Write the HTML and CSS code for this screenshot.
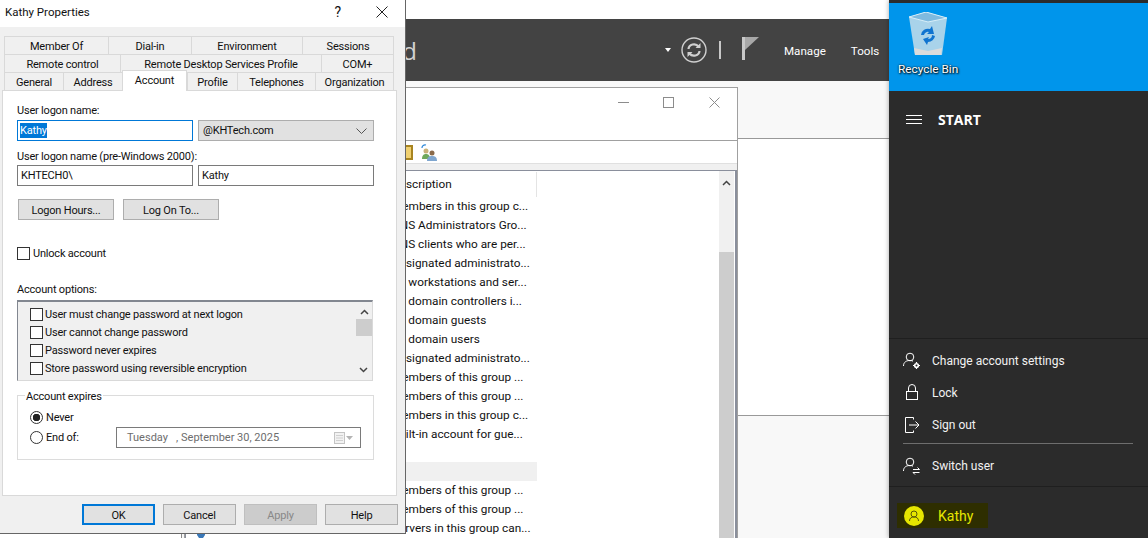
FILE: index.html
```html
<!DOCTYPE html>
<html lang="en">
<head>
    <meta charset="UTF-8">
    <title>Kathy Properties</title>
    <link rel="stylesheet" href="styles.css">
</head>
<body>
    <div class="desktop">

        <!-- server manager behind everything -->
        <div class="server">
            <div class="server-bar">
                <div class="server-title">d</div>
                <div class="server-tools">
                    <span class="caret"></span>
                    <svg class="refresh" width="26" height="26" viewBox="0 0 26 26" fill="none" stroke="#d0d0d0">
                        <circle cx="13" cy="13" r="12" stroke-width="1.4"/>
                        <path d="M7.5 12a5.5 5 0 0 1 10-2.5M18.500 14a5.500 5 0 0 1-10 2.500" stroke-width="2.200"/>
                        <path d="M19.500 6v5h-5zM6.500 20v-5h5z" fill="#d0d0d0" stroke="none"/>
                    </svg>
                    <span class="bar-sep"></span>
                    <svg class="flag" width="17" height="23" viewBox="0 0 17 23">
                        <rect x="0" y="0" width="3" height="23" fill="#c8c8c8"/>
                        <path d="M3 0h14l-14 13z" fill="#a8a8a8"/>
                    </svg>
                    <span class="bar-link manage">Manage</span>
                    <span class="bar-link">Tools</span>
                </div>
            </div>
            <div class="server-sub"></div>
            <div class="server-main"></div>
            <div class="server-foot"></div>
        </div>

        <!-- users and computers window -->
        <div class="aduc">
            <div class="aduc-title">
                <span class="win-min"></span>
                <span class="win-max"></span>
                <svg class="win-close" width="11" height="11" viewBox="0 0 11 11"><path d="M0.500 0.500l10 10M10.500 0.500l-10 10" stroke="#8c8c8c"/></svg>
            </div>
            <div class="aduc-toolbar">
                <span class="tb-folder"></span>
                <svg class="tb-users" width="17" height="17" viewBox="0 0 17 17">
                    <path d="M1 4a3 3 0 0 1 4-3" fill="none" stroke="#2a86d8" stroke-width="1.200"/>
                    <circle cx="5" cy="7" r="2.500" fill="#c9b27a"/>
                    <path d="M1 15c0-4 2-5 4-5s4 1 4 5z" fill="#6fa85c"/>
                    <circle cx="11" cy="9" r="2.500" fill="#8a6a4a"/>
                    <path d="M6 17c0-4 2-5 5-5s5 1 5 5z" fill="#7fa6cf"/>
                </svg>
            </div>
            <div class="aduc-gap"></div>
            <div class="aduc-list">
                <div class="list-body">
                    <div class="list-head"><span class="desc">Description</span></div>
                    <div class="row"><span class="desc">Members in this group c...</span></div>
                    <div class="row"><span class="desc">DNS Administrators Gro...</span></div>
                    <div class="row"><span class="desc">DNS clients who are per...</span></div>
                    <div class="row"><span class="desc">Designated administrato...</span></div>
                    <div class="row"><span class="desc">All workstations and ser...</span></div>
                    <div class="row"><span class="desc">All domain controllers i...</span></div>
                    <div class="row"><span class="desc">All domain guests</span></div>
                    <div class="row"><span class="desc">All domain users</span></div>
                    <div class="row"><span class="desc">Designated administrato...</span></div>
                    <div class="row"><span class="desc">Members of this group ...</span></div>
                    <div class="row"><span class="desc">Members of this group ...</span></div>
                    <div class="row"><span class="desc">Members in this group c...</span></div>
                    <div class="row"><span class="desc">Built-in account for gue...</span></div>
                    <div class="row row-hl"></div>
                    <div class="row"><span class="desc">Members of this group ...</span></div>
                    <div class="row"><span class="desc">Members of this group ...</span></div>
                    <div class="row"><span class="desc">Servers in this group can...</span></div>
                </div>
                <div class="list-scroll">
                    <svg class="arrow-up" width="9" height="6" viewBox="0 0 9 6"><path d="M1 5l3.500-3.500L8 5" fill="none" stroke="#444" stroke-width="1.500"/></svg>
                    <div class="list-thumb"></div>
                </div>
            </div>
        </div>

        <svg class="tree-icon" width="8" height="5" viewBox="0 0 8 5"><path d="M0 0h8v2l-2 3H2L0 2z" fill="#3a78b8"/></svg>

        <!-- properties dialog -->
        <div class="dialog">
            <div class="dlg-title">
                <span class="dlg-name">Kathy Properties</span>
                <span class="dlg-help">?</span>
                <svg class="dlg-close" width="12" height="12" viewBox="0 0 12 12"><path d="M0.500 0.500l11 11M11.500 0.500l-11 11" stroke="#222"/></svg>
            </div>

            <div class="tabs">
                <div class="tab-row">
                    <div class="tab w104">Member Of</div>
                    <div class="tab w83">Dial-in</div>
                    <div class="tab w111">Environment</div>
                    <div class="tab w92">Sessions</div>
                </div>
                <div class="tab-row">
                    <div class="tab w116">Remote control</div>
                    <div class="tab w201">Remote Desktop Services Profile</div>
                    <div class="tab w73">COM+</div>
                </div>
                <div class="tab-row">
                    <div class="tab w59">General</div>
                    <div class="tab w59">Address</div>
                    <div class="tab tab-on">Account</div>
                    <div class="tab w50">Profile</div>
                    <div class="tab w78">Telephones</div>
                    <div class="tab w79">Organization</div>
                </div>
            </div>

            <div class="panel">
                <div class="lbl first">User logon name:</div>
                <div class="field-row">
                    <div class="field field-focus"><span class="sel">Kathy</span></div>
                    <div class="field field-combo">@KHTech.com
                        <svg width="11" height="6" viewBox="0 0 11 6"><path d="M0.500 0.500l5 5 5-5" fill="none" stroke="#555"/></svg>
                    </div>
                </div>
                <div class="lbl second">User logon name (pre-Windows 2000):</div>
                <div class="field-row">
                    <div class="field">KHTECH0\</div>
                    <div class="field">Kathy</div>
                </div>
                <div class="btn-row">
                    <div class="btn">Logon Hours...</div>
                    <div class="btn">Log On To...</div>
                </div>
                <div class="check-row unlock"><span class="check"></span>Unlock account</div>
                <div class="lbl third">Account options:</div>
                <div class="opts">
                    <div class="opts-list">
                        <div class="check-row"><span class="check"></span>User must change password at next logon</div>
                        <div class="check-row"><span class="check"></span>User cannot change password</div>
                        <div class="check-row"><span class="check"></span>Password never expires</div>
                        <div class="check-row"><span class="check"></span>Store password using reversible encryption</div>
                    </div>
                    <div class="opts-scroll">
                        <svg width="9" height="6" viewBox="0 0 9 6"><path d="M1 5l3.500-3.500L8 5" fill="none" stroke="#444" stroke-width="1.500"/></svg>
                        <div class="opts-thumb"></div>
                        <svg class="opts-down" width="9" height="6" viewBox="0 0 9 6"><path d="M1 1l3.500 3.500L8 1" fill="none" stroke="#444" stroke-width="1.500"/></svg>
                    </div>
                </div>
                <div class="group">
                    <span class="legend">Account expires</span>
                    <div class="radio-row"><span class="radio radio-on"></span>Never</div>
                    <div class="radio-row end-row">
                        <span class="radio"></span><span class="end-label">End of:</span>
                        <div class="date">
                            <span class="date-text">Tuesday &nbsp; , September 30, 2025</span>
                            <svg width="20" height="12" viewBox="0 0 20 12">
                                <rect x="0.500" y="0.500" width="10" height="11" fill="#f2f2f2" stroke="#c4c4c4"/>
                                <path d="M2 3.500h7M2 6h7M2 8.500h7" stroke="#d0d0d0"/>
                                <path d="M12 4h7l-3.500 4z" fill="#b4b4b4"/>
                            </svg>
                        </div>
                    </div>
                </div>
            </div>

            <div class="dlg-buttons">
                <div class="btn btn-ok">OK</div>
                <div class="btn btn-wide">Cancel</div>
                <div class="btn btn-wide btn-off">Apply</div>
                <div class="btn btn-wide">Help</div>
            </div>
        </div>

        <!-- start menu on the right -->
        <div class="start">
            <div class="wallpaper">
                <svg class="bin" width="38" height="43" viewBox="0 0 38 43">
                    <path d="M0 5L17 0l21 6-5 37H6z" fill="#a9d3ea"/>
                    <path d="M0 5L17 0l21 6-19 4z" fill="#7fbadf"/>
                    <path d="M0 5L17 0l21 6-19 4z" fill="none" stroke="#d8eef8"/>
                    <path d="M5 36l14 3 14-3-1 7H6z" fill="#dcdcdc"/>
                    <path d="M12 23a7 7 0 0 1 9-6l2-3 2 8-7 0 2-2a4 4 0 0 0-5 3z" fill="#0f74d0"/>
                    <path d="M26 24a7 7 0 0 1-7 6l-1 3-4-6 6-2-1 2a4 4 0 0 0 4-4z" fill="#0f74d0"/>
                </svg>
                <div class="bin-label">Recycle Bin</div>
            </div>
            <div class="start-head">
                <svg width="16" height="9" viewBox="0 0 16 9"><path d="M0 0.500h16M0 4.500h16M0 8.500h16" stroke="#fff"/></svg>
                <span class="start-word">START</span>
            </div>
            <div class="start-items">
                <div class="item">
                    <svg width="18" height="18" viewBox="0 0 18 18" fill="none" stroke="#fff">
                        <circle cx="7" cy="5" r="3.800"/>
                        <path d="M0.500 14c0-4 3-5.500 6.500-5.500 1 0 2 .2 3 .6"/>
                        <circle cx="13.500" cy="13.500" r="1.800" stroke-width="1.600"/>
                        <path d="M13.500 10v1.500M13.500 15.500V17M10 13.500h1.500M15.500 13.500H17" stroke-width="1.200"/>
                    </svg>
                    <span>Change account settings</span>
                </div>
                <div class="item">
                    <svg width="18" height="18" viewBox="0 0 18 18" fill="none" stroke="#fff">
                        <rect x="3.500" y="7.500" width="11" height="8"/>
                        <path d="M5.500 7.500V4a3.500 3.500 0 0 1 7 0v3.500"/>
                    </svg>
                    <span>Lock</span>
                </div>
                <div class="item">
                    <svg width="18" height="18" viewBox="0 0 18 18" fill="none" stroke="#fff">
                        <path d="M10.500 3.500V1.500h-8v15h8v-2"/>
                        <path d="M6 9h10M12.500 5.500L16 9l-3.500 3.500"/>
                    </svg>
                    <span>Sign out</span>
                </div>
                <div class="item-sep"></div>
                <div class="item item-switch">
                    <svg width="18" height="18" viewBox="0 0 18 18" fill="none" stroke="#fff">
                        <circle cx="7" cy="5" r="3.800"/>
                        <path d="M0.500 14c0-4 3-5.500 6.500-5.500 1 0 2 .2 3 .6"/>
                        <path d="M10 12.500h6.500M14.500 10.500l2 2M10 15.500h6.500M12 17.500l-2-2"/>
                    </svg>
                    <span>Switch user</span>
                </div>
            </div>
            <div class="start-user">
                <div class="user-mark">
                    <svg width="20" height="20" viewBox="0 0 20 20">
                        <circle cx="10" cy="10" r="10" fill="#e6e600"/>
                        <circle cx="10" cy="8" r="3" fill="none" stroke="#55550a"/>
                        <path d="M5.500 15c0-3 2-4 4.500-4s4.500 1 4.500 4" fill="none" stroke="#55550a"/>
                    </svg>
                    <span class="user-name">Kathy</span>
                </div>
            </div>
        </div>
    </div>
</body>
</html>
```

FILE: styles.css
```css
*{
    margin: 0;
    padding: 0;
    box-sizing: border-box;
}
body{
    background: #fff;
    font-family: Roboto, "Liberation Sans", sans-serif;
    font-size: 11.8px;
    color: #111;
}
.desktop{
    width: 1148px;
    height: 538px;
    position: relative;
    overflow: hidden;
}

/* server manager */
.server{
    position: absolute;
    left: 181px;
    top: 0;
    width: 708px;
    height: 538px;
    border-left: 1px solid #8a8a8a;
    padding-top: 19px;
    display: flex;
    flex-direction: column;
}
.server-bar{
    height: 62px;
    background: #434343;
    display: flex;
    align-items: center;
    justify-content: space-between;
}
.server-title{
    width: 235px;
    text-align: right;
    font-family: "Open Sans", sans-serif;
    font-size: 24px;
    color: #d2d2d2;
}
.server-tools{
    display: flex;
    align-items: center;
    width: 224px;
}
.caret{
    width: 0;
    height: 0;
    border-left: 3.500px solid transparent;
    border-right: 3.500px solid transparent;
    border-top: 4px solid #fff;
    margin-right: 10px;
}
.bar-sep{
    width: 2px;
    height: 18px;
    background: #c8c8c8;
    margin: 0 21px 0 12px;
}
.flag{
    margin-bottom: 3px;
}
.bar-link{
    font-size: 11.6px;
    color: #fff;
    margin-left: 25px;
    margin-top: 2px;
}
.server-sub{
    height: 58px;
    background: #f8f8f8;
    border-bottom: 1px solid #999;
}
.server-main{
    height: 277px;
    background: #fff;
    border-bottom: 1px solid #999;
}
.server-foot{
    flex: 1;
    background: #f8f8f8;
}
.tree-icon{
    position: absolute;
    left: 197px;
    top: 533px;
}

/* aduc window */
.aduc{
    position: absolute;
    left: 184px;
    top: 87px;
    width: 554px;
    height: 460px;
    background: #fff;
    border: 1px solid #a0a0a0;
}
.aduc-title{
    height: 53px;
    border-bottom: 1px solid #a0a0a0;
    position: relative;
}
.win-min{
    position: absolute;
    left: 433px;
    top: 14px;
    width: 11px;
    height: 1px;
    background: #8c8c8c;
}
.win-max{
    position: absolute;
    left: 478px;
    top: 9px;
    width: 11px;
    height: 11px;
    border: 1px solid #8c8c8c;
}
.win-close{
    position: absolute;
    left: 524px;
    top: 9px;
}
.aduc-toolbar{
    height: 23px;
    border-bottom: 1px solid #e0e0e0;
    display: flex;
    align-items: center;
    justify-content: flex-end;
    padding-right: 299px;
}
.tb-folder{
    width: 14px;
    height: 15px;
    background: #f0d070;
    border: 2px solid #a88420;
    margin-right: 8px;
}
.aduc-gap{
    height: 6px;
    background: #f0f0f0;
}
.aduc-list{
    display: flex;
    border: 1px solid #8a8f9c;
    border-bottom: none;
    border-right-width: 2px;
    height: 400px;
}
.list-body{
    width: 533px;
    padding-top: 1px;
}
.list-head{
    height: 25px;
    width: 351px;
    border-right: 1px solid #e4e4e4;
    line-height: 24px;
}
.row{
    height: 19px;
    line-height: 19px;
    width: 351px;
    white-space: nowrap;
}
.row-hl{
    background: #f0f0f0;
    margin-top: 18px;
}
.desc{
    margin-left: 206px;
}
.list-scroll{
    width: 15px;
    background: #f0f0f0;
    padding-top: 9px;
    text-align: center;
}
.arrow-up{
    display: block;
    margin: 0 auto;
}
.list-thumb{
    height: 300px;
    background: #cdcdcd;
    margin-top: 66px;
}

/* properties dialog */
.dialog{
    position: absolute;
    left: 0;
    top: 0;
    width: 406px;
    height: 534px;
    background: #f0f0f0;
    border-right: 1px solid #666;
    border-bottom: 1px solid #666;
    font-size: 11px;
    letter-spacing: -0.2px;
}
.dlg-title{
    height: 27px;
    background: #fff;
    display: flex;
    align-items: center;
    padding: 0 17px 4px 5px;
}
.dlg-name{
    flex: 1;
    font-size: 11.5px;
    letter-spacing: 0;
}
.dlg-help{
    font-size: 14px;
    margin-right: 35px;
}
.tabs{
    padding: 9px 0 0 4px;
}
.tab-row{
    display: flex;
    height: 18px;
}
.tab{
    height: 18px;
    background: #f0f0f0;
    border: 1px solid #d9d9d9;
    border-right: none;
    border-bottom: none;
    text-align: center;
    line-height: 19px;
    white-space: nowrap;
}
.tab:last-child{
    border-right: 1px solid #d9d9d9;
}
.w50{ width: 50px; }
.w59{ width: 59px; }
.w73{ width: 73px; }
.w78{ width: 78px; }
.w79{ width: 79px; }
.w83{ width: 83px; }
.w92{ width: 92px; }
.w104{ width: 104px; }
.w111{ width: 111px; }
.w116{ width: 116px; }
.w201{ width: 201px; }
.tab-on{
    width: 65px;
    height: 21px;
    margin-top: -2px;
    background: #fff;
    border-right: 1px solid #d9d9d9;
    position: relative;
    z-index: 1;
    line-height: 19px;
}
.panel{
    margin-left: 2px;
    width: 395px;
    height: 406px;
    background: #fff;
    border: 1px solid #d9d9d9;
    padding: 0 22px 0 14px;
}
.lbl{
    line-height: 18px;
    height: 16px;
}
.first{
    margin-top: 11px;
}
.second{
    margin-top: 7px;
}
.third{
    margin-top: 19px;
}
.field-row{
    display: grid;
    grid-template-columns: 176px 176px;
    column-gap: 5px;
    margin-top: 2px;
}
.second + .field-row{
    margin-top: 1px;
}
.field{
    height: 21px;
    border: 1px solid #7a7a7a;
    line-height: 19px;
    padding-left: 3px;
    white-space: nowrap;
}
.field-focus{
    border-color: #0078d7;
    padding-left: 2px;
}
.sel{
    display: inline-block;
    height: 15px;
    line-height: 15px;
    background: #0078d7;
    color: #fff;
}
.field-combo{
    background: #e1e1e1;
    border-color: #adadad;
    display: flex;
    align-items: center;
    justify-content: space-between;
    padding: 0 6px 0 4px;
}
.btn-row{
    display: flex;
    gap: 9px;
    margin: 13px 0 0 1px;
}
.btn{
    width: 96px;
    height: 21px;
    background: #e1e1e1;
    border: 1px solid #adadad;
    text-align: center;
    line-height: 21px;
}
.check-row{
    display: flex;
    align-items: center;
    height: 18px;
    white-space: nowrap;
}
.unlock{
    margin-top: 24px;
}
.check{
    width: 13px;
    height: 13px;
    background: #fff;
    border: 1px solid #333;
    margin-right: 3px;
}
.opts{
    display: flex;
    height: 81px;
    margin-top: 3px;
    width: 356px;
    background: #f0f0f0;
    border: 1px solid #d9d9d9;
    border-top: 2px solid #828790;
    border-left: 1px solid #828790;
}
.opts-list{
    flex: 1;
    padding: 3px 0 0 12px;
}
.opts .check{
    margin-right: 2px;
}
.opts-scroll{
    width: 16px;
    padding-top: 7px;
    text-align: center;
    position: relative;
}
.opts-scroll svg{
    display: block;
    margin: 0 auto;
}
.opts-thumb{
    height: 17px;
    background: #cdcdcd;
    margin-top: 4px;
}
.opts-down{
    position: absolute;
    left: 3px;
    bottom: 7px;
}
.group{
    position: relative;
    width: 357px;
    height: 65px;
    margin-top: 14px;
    border: 1px solid #dcdcdc;
    padding: 11px 12px 0;
}
/* legend sits across the group border */
.legend{
    position: absolute;
    left: 7px;
    top: -6px;
    background: #fff;
    padding: 0 1px;
    line-height: 14px;
}
.radio-row{
    display: flex;
    align-items: center;
    height: 20px;
}
.radio{
    width: 13px;
    height: 13px;
    border: 1px solid #333;
    border-radius: 50%;
    margin-right: 3px;
    background: #fff;
}
.radio-on{
    background: radial-gradient(circle, #222 0, #222 3.500px, #fff 4px);
}
.end-row{
    height: 21px;
}
.end-label{
    width: 70px;
}
.date{
    width: 245px;
    height: 21px;
    border: 1px solid #7a7a7a;
    display: flex;
    align-items: center;
    justify-content: space-between;
    padding: 0 6px 0 10px;
    color: #6d6d6d;
    letter-spacing: 0;
}
.dlg-buttons{
    display: flex;
    justify-content: flex-end;
    gap: 8px;
    padding: 8px 7px 0 0;
}
.btn-wide{
    width: 73px;
}
.btn-ok{
    width: 73px;
    border: 2px solid #0078d7;
    line-height: 19px;
}
.btn-off{
    background: #ccc;
    border-color: #bfbfbf;
    color: #888;
}

/* start menu */
.start{
    position: absolute;
    left: 889px;
    top: 0;
    width: 259px;
    height: 538px;
    background: #2b2b2b;
    padding-top: 3px;
    box-shadow: 0 0 5px rgba(0,0,0,0.35);
    display: flex;
    flex-direction: column;
}
.wallpaper{
    height: 88px;
    background: #0095eb;
    padding: 9px 0 0 9px;
}
.bin{
    display: block;
    margin-left: 11px;
}
.bin-label{
    color: #fff;
    margin-top: 7px;
    text-shadow: 0 0 2px #000, 1px 1px 2px #000;
}
.start-head{
    height: 248px;
    padding: 18px 0 0 17px;
    display: flex;
    align-items: flex-start;
    gap: 16px;
    border-bottom: 1px solid #1f1f1f;
    color: #fff;
}
.start-head svg{
    margin-top: 6px;
}
.start-word{
    font-family: "Open Sans", sans-serif;
    font-size: 14px;
    font-weight: 700;
    line-height: 22px;
}
.start-items{
    height: 148px;
    border-bottom: 1px solid #1f1f1f;
    padding: 6px 15px 0 14px;
}
.item{
    display: flex;
    align-items: center;
    height: 32px;
    gap: 11px;
    color: #f2f2f2;
    font-size: 12px;
}
.item-sep{
    height: 1px;
    background: #6e6e6e;
    margin: 2px 0 6px;
}
.start-user{
    padding: 16px 0 0 8px;
}
.user-mark{
    display: flex;
    align-items: center;
    gap: 14px;
    width: 91px;
    height: 25px;
    background: #2e2e00;
    padding-left: 7px;
}
.user-name{
    font-size: 14px;
    color: #e6e600;
}
```
